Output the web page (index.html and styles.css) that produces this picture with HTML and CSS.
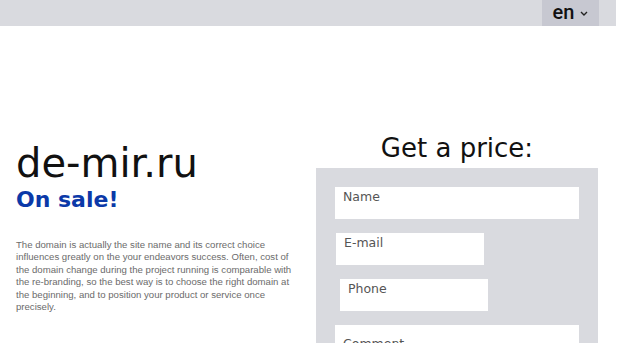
FILE: index.html
```html
<!DOCTYPE html>
<html lang="en">
<head>
  <meta charset="UTF-8" />
  <meta name="viewport" content="width=device-width, initial-scale=1.0"/>
  <title>de-mir.ru is on sale</title>
  <link rel="stylesheet" href="styles.css">
</head>
<body>

  <!-- Top Bar -->
  <header class="top-bar">
    <div class="lang-select">
      <span>en</span>
      <svg class="chevron" width="8" height="5" viewBox="0 0 8 5">
        <polyline points="1,1 4,4 7,1" fill="none" stroke="#222" stroke-width="1.4"/>
      </svg>
    </div>
  </header>

  <!-- Main Content -->
  <div class="main-content">
    <div class="domain-info">
      <h1>de-mir.ru</h1>
      <div class="on-sale">On sale!</div>
      <p class="description">
        The domain is actually the site name and its correct choice influences greatly on the your endeavors success. Often, cost of the domain change during the project running is comparable with the re-branding, so the best way is to choose the right domain at the beginning, and to position your product or service once precisely.
      </p>
    </div>

    <div class="price-form">
      <h2>Get a price:</h2>
      <form class="form-panel">
        <input type="text" class="field field-wide" placeholder="Name" />
        <input type="email" class="field field-short field-email" placeholder="E-mail" />
        <input type="text" class="field field-short field-phone" placeholder="Phone" />
        <textarea class="field field-wide field-comment" placeholder="Comment"></textarea>
      </form>
    </div>
  </div>

</body>
</html>
```

FILE: styles.css
```css
body {
  margin: 0;
  font-family: "DejaVu Sans", sans-serif;
  background-color: #fff;
  overflow: hidden;
}

/* Top Bar */
.top-bar {
  width: 616px;
  height: 26px;
  background-color: #d9dadf;
  display: flex;
  justify-content: flex-end;
}

.lang-select {
  width: 57px;
  margin-right: 17px;
  background-color: #c7c8d1;
  display: flex;
  align-items: center;
  justify-content: center;
  gap: 6px;
  font-family: Roboto, sans-serif;
  font-weight: 500;
  font-size: 20px;
  color: #111;
}

.lang-select span {
  line-height: 26px;
  margin-top: -3px;
}

.chevron {
  margin-top: 1px;
}

/* Main Content */
.main-content {
  display: flex;
  align-items: flex-start;
  gap: 16px;
  padding-left: 16px;
  margin-top: 107px;
}

.domain-info {
  width: 284px;
  padding-top: 10px;
}

h1 {
  margin: 0;
  font-size: 40px;
  font-weight: normal;
  line-height: 40px;
  color: #111;
}

.on-sale {
  margin-top: 6px;
  font-size: 22px;
  line-height: 22px;
  font-weight: bold;
  color: #0b39a8;
}

.description {
  margin: 28px 0 0;
  font-family: "Liberation Sans", Arial, sans-serif;
  font-size: 9.6px;
  line-height: 12.4px;
  color: #6b6b6b;
}

.price-form {
  width: 282px;
}

h2 {
  margin: 0 0 5px;
  text-align: center;
  font-size: 26px;
  font-weight: normal;
  line-height: 30px;
  color: #111;
}

.form-panel {
  background-color: #d9dadf;
  padding: 19px 19px 40px;
}

.field {
  display: block;
  box-sizing: border-box;
  height: 32px;
  margin: 0 0 14px;
  padding: 2px 8px 16px;
  border: none;
  background-color: #fff;
  font-family: "DejaVu Sans", sans-serif;
  font-size: 12.5px;
  line-height: 14px;
  color: #333;
  resize: none;
  outline: none;
}

.field::placeholder {
  color: #555;
}

.field-wide {
  width: 244px;
}

.field-short {
  width: 148px;
}

.field-email {
  margin-left: 1px;
}

.field-phone {
  margin-left: 5px;
}

.field-comment {
  height: 60px;
  padding-top: 12px;
}
```
